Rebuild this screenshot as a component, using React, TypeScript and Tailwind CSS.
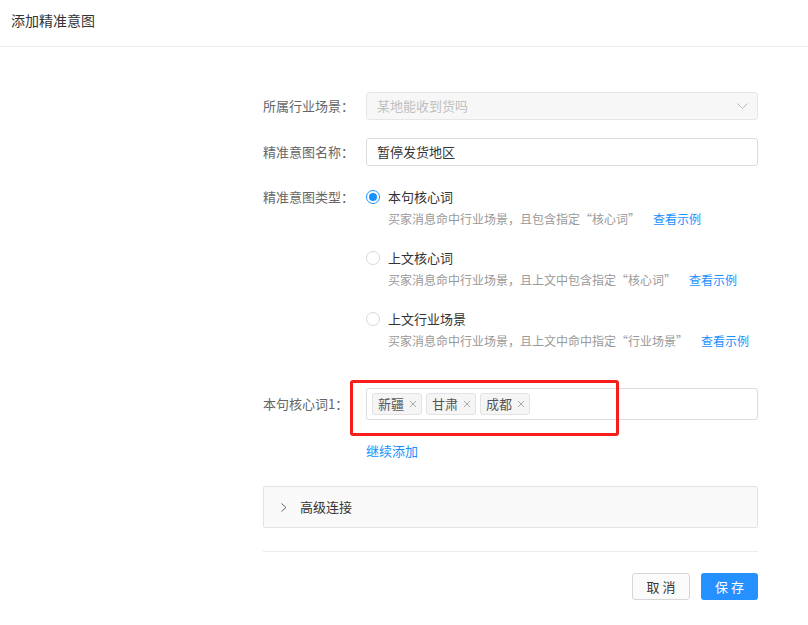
import React from "react";

const font = "font-['Noto_Sans_CJK_SC','Noto_Sans',sans-serif]";

function Radio({ checked }: { checked?: boolean }) {
  return checked ? (
    <span className="w-[14px] h-[14px] rounded-full border border-[#1890ff] flex items-center justify-center shrink-0">
      <span className="w-[8px] h-[8px] rounded-full bg-[#1890ff]" />
    </span>
  ) : (
    <span className="w-[14px] h-[14px] rounded-full border border-[#d9d9d9] bg-white shrink-0" />
  );
}

function Option({ title, desc, checked, last }: { title: string; desc: string; checked?: boolean; last?: boolean }) {
  return (
    <div className={last ? "" : "mb-[17px]"}>
      <div className="h-[22px] flex items-center">
        <Radio checked={checked} />
        <span className="ml-[8px] text-[13px] leading-[22px] text-[#333]">{title}</span>
      </div>
      <div className="h-[22px] flex items-center pl-[22px] text-[12px] leading-[22px]">
        <span className="text-[#999]">{desc}</span>
        <span className="ml-[13px] text-[#1890ff]">查看示例</span>
      </div>
    </div>
  );
}

function Tag({ text }: { text: string }) {
  return (
    <span className="h-[22px] flex items-center border border-[#e3e3e3] bg-[#f5f5f5] rounded-[3px] pl-[5px] pr-[4px] text-[13px] leading-[20px] text-[#555]">
      {text}
      <svg className="ml-[5px]" width="8" height="8" viewBox="0 0 8 8">
        <path d="M1 1L7 7M7 1L1 7" stroke="#aaa" strokeWidth="1" />
      </svg>
    </span>
  );
}

export default function App() {
  return (
    <div className={`w-[808px] h-[625px] bg-white ${font} overflow-hidden`}>
      <div className="h-[47px] border-b border-[#ebebeb] pl-[11px] pt-[10px] text-[14px] leading-[20px] text-[#333]">
        添加精准意图
      </div>
      <div className="ml-[263px] w-[495px] mt-[45px]">
        <div className="flex items-center h-[28px] mb-[18px]">
          <div className="w-[103px] text-[13px] text-[#666] leading-[20px]">所属行业场景：</div>
          <div className="flex-1 h-[28px] border border-[#e6e6e6] bg-[#f7f7f7] rounded-[3px] flex items-center justify-between pl-[10px] pr-[9px]">
            <span className="text-[13px] text-[#c0c0c0] leading-[20px]">某地能收到货吗</span>
            <svg width="11" height="6" viewBox="0 0 11 6">
              <path d="M0.5 0.5L5.5 5.5L10.5 0.5" stroke="#bbb" strokeWidth="1" fill="none" />
            </svg>
          </div>
        </div>
        <div className="flex items-center h-[28px] mb-[20px]">
          <div className="w-[103px] text-[13px] text-[#666] leading-[20px]">精准意图名称：</div>
          <div className="flex-1 h-[28px] border border-[#dcdcdc] bg-white rounded-[3px] flex items-center pl-[10px]">
            <span className="text-[13px] text-[#333] leading-[20px]">暂停发货地区</span>
          </div>
        </div>
        <div className="flex items-start">
          <div className="w-[103px] text-[13px] text-[#666] leading-[22px]">精准意图类型：</div>
          <div className="flex-1">
            <Option checked title="本句核心词" desc="买家消息命中行业场景，且包含指定“核心词”" />
            <Option title="上文核心词" desc="买家消息命中行业场景，且上文中包含指定“核心词”" />
            <Option last title="上文行业场景" desc="买家消息命中行业场景，且上文中命中指定“行业场景”" />
          </div>
        </div>
        <div className="relative flex items-center h-[32px] mt-[36px]">
          <div className="w-[103px] text-[13px] text-[#666] leading-[20px]">本句核心词1：</div>
          <div className="flex-1 h-[32px] border border-[#dcdcdc] bg-white rounded-[3px] flex items-center pl-[5px] gap-[4px]">
            <Tag text="新疆" />
            <Tag text="甘肃" />
            <Tag text="成都" />
          </div>
          <div className="absolute left-[87px] top-[-8px] w-[269px] h-[56px] border-[3px] border-[#f81d1d] rounded-[3px]" />
        </div>
        <div className="ml-[103px] mt-[20px] text-[13px] leading-[22px] text-[#1890ff]">继续添加</div>
        <div className="mt-[24px] h-[42px] border border-[#e3e3e3] bg-[#f9f9f9] rounded-[2px] flex items-center pl-[17px]">
          <svg width="6" height="9" viewBox="0 0 6 9">
            <path d="M0.5 0.5L5 4.5L0.5 8.5" stroke="#666" strokeWidth="1" fill="none" />
          </svg>
          <span className="ml-[13px] text-[13px] leading-[20px] text-[#333]">高级连接</span>
        </div>
        <div className="mt-[23px] border-t border-[#ebebeb]" />
        <div className="mt-[21px] flex justify-end gap-[11px]">
          <div className="w-[58px] h-[27px] border border-[#d6d6d6] bg-[#fbfbfb] rounded-[3px] flex items-center justify-center text-[13px] text-[#333]">
            取&nbsp;消
          </div>
          <div className="w-[57px] h-[27px] bg-[#2590ff] rounded-[3px] flex items-center justify-center text-[13px] text-white">
            保&nbsp;存
          </div>
        </div>
      </div>
    </div>
  );
}
